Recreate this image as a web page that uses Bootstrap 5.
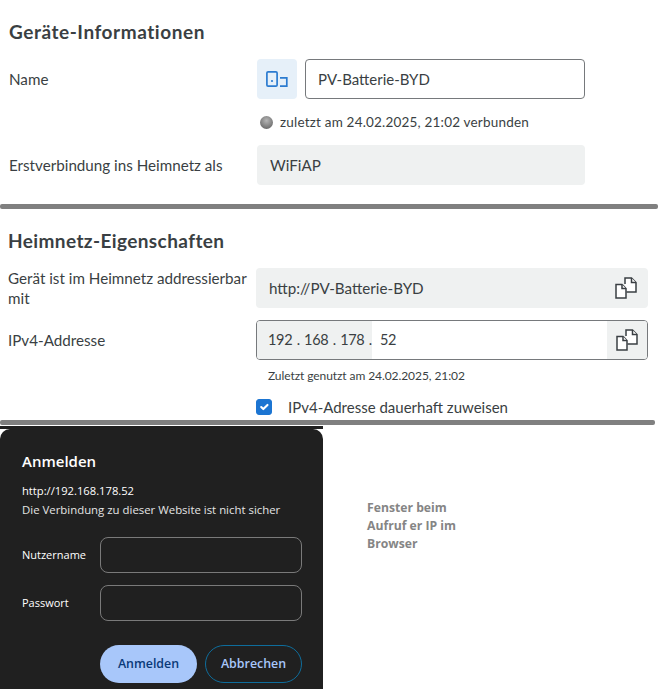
<!doctype html>
<html lang="de"><head><meta charset="utf-8">
<link href="https://cdn.jsdelivr.net/npm/bootstrap@5.3.0/dist/css/bootstrap.min.css" rel="stylesheet">
<style>
html,body{height:689px;overflow:hidden}
body{background:#fff;color:#3a3f43;font-family:"Lato","Liberation Sans",sans-serif;font-size:15.2px;line-height:20px}
.sec-a{padding:20px 0 19px 9px}
.sec-b{padding:20px 11px 3px 8px}
.sec-title{font-size:19px;font-weight:700;line-height:24px;margin:0 0 15px;letter-spacing:.4px}
.sec-a .sec-title{letter-spacing:.55px}
.lbl{width:248px;flex:none}
.rule{height:5px;background:#808080;border-radius:2px}
.rule-a{width:658px}.rule-b{width:655px}
.ico-box{width:40px;height:40px;background:#e6f0f9;border-radius:4px}
.name-input.form-control{width:280px;height:40px;border:1px solid #76797c;border-radius:4px;padding:0 12px;color:#3a3f43;font-size:15px}
.ro-a{width:328px;height:40px;background:#eff1f1;border-radius:4px;padding:0 13px}
.ro-b{width:392px;height:40px;background:#eff1f1;border-radius:4px;padding:0 11px 0 13px}
.ip-box{width:392px;height:40px;border:1px solid #76797c;border-radius:4px;overflow:hidden}
.ip-pre{width:115px;background:#eff1f1;padding-left:11px;font-size:14.5px;letter-spacing:-.3px;word-spacing:.9px;white-space:pre}
.ip-copy{width:40px;background:#eff1f1}
.ip-val{padding-left:8px;font-size:14.5px;letter-spacing:-.3px}
.led{width:13px;height:13px;border-radius:50%;background:radial-gradient(circle at 50% 35%,#b5b5b5,#6f6f6f 75%);margin-right:7px}
.status{margin:13px 0 13px 251px;height:20px;font-size:13.5px;letter-spacing:.2px}
.hint{font-size:12px;margin:6px 0 0 260px;letter-spacing:-.08px;height:20px;line-height:20px}
.chk{margin:11px 0 0 248px;font-size:15px}
.chk .form-check-input{width:16px;height:16px;margin:0 16px 0 0;background-color:#1c75d2;border-color:#1c75d2;border-radius:3px;float:none}
.gap-r{margin-top:12px}
.lower{padding-top:1px}
.dlg-wrap{width:323px;height:263px;border-top:3px solid #202020;flex:none}
.dlg{background:#202020;height:260px;border-radius:10px 10px 0 0;padding:22px 21px 0 22px;color:#fff;font-family:"Open Sans","Liberation Sans",sans-serif;font-size:11px}
.dlg-title{font-size:15px;font-weight:600;line-height:20px;margin-bottom:12px}
.dlg-url{line-height:16px;margin-bottom:3px;font-size:11.2px}
.dlg-sub{line-height:16px;color:#e4e4e4;margin-bottom:19px;font-size:11.4px;white-space:nowrap}
.dlg-lab{width:78px}
.dlg-in{width:202px;height:36px;border:1px solid #7a7a7a;border-radius:8px}
.dlg-row{margin-bottom:12px}
.dlg-btns{margin:24px 0 0 78px;gap:8px}
.btn.dlg-ok,.btn.dlg-no{height:38px;border-radius:19px;padding:0;font-size:12.4px;font-weight:600;font-family:inherit}
.btn.dlg-ok{width:97px;background:#a8c7fa;border:0;color:#0a3a78}
.btn.dlg-no{width:97px;background:transparent;border:1px solid #0e6d9c;color:#a8c7fa}
.note{margin:73px 0 0 44px;color:#858585;font-weight:700;font-size:12.2px;line-height:18px;font-family:"Open Sans","Liberation Sans",sans-serif}
</style></head>
<body>
<section class="sec-a">
  <h2 class="sec-title">Geräte-Informationen</h2>
  <div class="d-flex align-items-center">
    <div class="lbl">Name</div>
    <div class="ico-box d-flex align-items-center justify-content-center me-2">
      <svg width="22" height="16" viewBox="0 0 22 16" fill="none" stroke="#2b7bd0" stroke-width="1.7"><rect x=".9" y=".9" width="10.2" height="14.2" rx="1.2"/><circle cx="6" cy="10" r="1.1" fill="#2b7bd0" stroke="none"/><path d="M14 6.8h6.8v8.3H14"/></svg>
    </div>
    <input class="form-control name-input" value="PV-Batterie-BYD">
  </div>
  <div class="status d-flex align-items-center"><span class="led"></span>zuletzt am 24.02.2025, 21:02 verbunden</div>
  <div class="d-flex align-items-center">
    <div class="lbl">Erstverbindung ins Heimnetz als</div>
    <div class="ro-a d-flex align-items-center">WiFiAP</div>
  </div>
</section>
<div class="rule rule-a"></div>
<section class="sec-b">
  <h2 class="sec-title">Heimnetz-Eigenschaften</h2>
  <div class="d-flex align-items-center">
    <div class="lbl">Gerät ist im Heimnetz addressierbar mit</div>
    <div class="ro-b d-flex align-items-center justify-content-between">http://PV-Batterie-BYD
      <svg width="22" height="22" viewBox="0 0 22 22" fill="#fff" stroke="#3a3f43" stroke-width="1.5"><path d="M10 7V1h6.5L21 5.5V15h-9.5"/><path d="M16.5 1v4.5H21"/><path d="M1 7.5h6l4 4V21H1z"/><path d="M7 7.5v4h4"/></svg>
    </div>
  </div>
  <div class="d-flex align-items-center gap-r">
    <div class="lbl">IPv4-Addresse</div>
    <div class="ip-box d-flex align-items-stretch">
      <div class="ip-pre d-flex align-items-center">192 . 168 . 178 .</div>
      <div class="ip-val d-flex align-items-center flex-grow-1">52</div>
      <div class="ip-copy d-flex align-items-center justify-content-center">
        <svg width="22" height="22" viewBox="0 0 22 22" fill="#fff" stroke="#3a3f43" stroke-width="1.5"><path d="M10 7V1h6.5L21 5.5V15h-9.5"/><path d="M16.5 1v4.5H21"/><path d="M1 7.5h6l4 4V21H1z"/><path d="M7 7.5v4h4"/></svg>
      </div>
    </div>
  </div>
  <div class="hint">Zuletzt genutzt am 24.02.2025, 21:02</div>
  <div class="chk d-flex align-items-center"><input class="form-check-input" type="checkbox" checked id="c1"><label for="c1">IPv4-Adresse dauerhaft zuweisen</label></div>
</section>
<div class="rule rule-b"></div>
<div class="lower d-flex">
  <div class="dlg-wrap">
    <div class="dlg">
      <div class="dlg-title">Anmelden</div>
      <div class="dlg-url">http://192.168.178.52</div>
      <div class="dlg-sub">Die Verbindung zu dieser Website ist nicht sicher</div>
      <div class="dlg-row d-flex align-items-center"><div class="dlg-lab">Nutzername</div><div class="dlg-in"></div></div>
      <div class="dlg-row d-flex align-items-center"><div class="dlg-lab">Passwort</div><div class="dlg-in"></div></div>
      <div class="dlg-btns d-flex"><button class="btn dlg-ok">Anmelden</button><button class="btn dlg-no">Abbrechen</button></div>
    </div>
  </div>
  <div class="note">Fenster beim<br>Aufruf er IP im<br>Browser</div>
</div>
<script src="https://cdn.jsdelivr.net/npm/bootstrap@5.3.0/dist/js/bootstrap.bundle.min.js"></script>
</body></html>
